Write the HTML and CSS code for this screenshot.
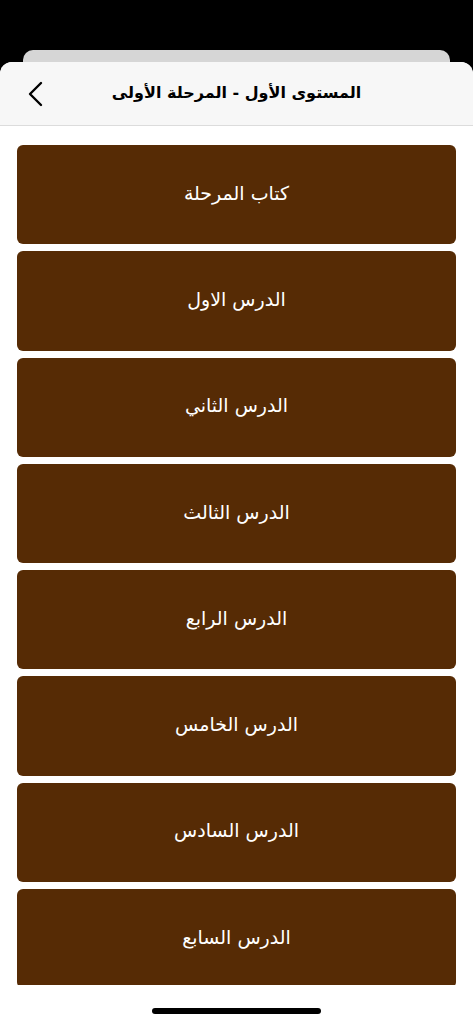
FILE: index.html
```html
<!DOCTYPE html>
<html lang="ar" dir="rtl">

<head>
    <meta charset="UTF-8">
    <meta name="viewport" content="width=device-width, initial-scale=1.0">
    <title>المستوى الأول - المرحلة الأولى</title>
    <link rel="stylesheet" href="styles.css">
</head>

<body>
    <div class="status-bar"></div>
    <div class="sheet-behind"></div>

    <div class="sheet">
        <header class="nav-bar">
            <button class="back-btn" aria-label="رجوع">
                <svg width="18" height="26" viewBox="0 0 18 26">
                    <path d="M14 2 L3 13 L14 24" fill="none" stroke="#000" stroke-width="2.4" stroke-linecap="round" stroke-linejoin="round" />
                </svg>
            </button>
            <h1 class="title">المستوى الأول - المرحلة الأولى</h1>
        </header>

        <div class="list">
            <a class="lesson" href="#">كتاب المرحلة</a>
            <a class="lesson" href="#">الدرس الاول</a>
            <a class="lesson" href="#">الدرس الثاني</a>
            <a class="lesson" href="#">الدرس الثالث</a>
            <a class="lesson" href="#">الدرس الرابع</a>
            <a class="lesson" href="#">الدرس الخامس</a>
            <a class="lesson" href="#">الدرس السادس</a>
            <a class="lesson" href="#">الدرس السابع</a>
        </div>

        <div class="home-bar">
            <span class="indicator"></span>
        </div>
    </div>
</body>

</html>
```

FILE: styles.css
```css
* {
    box-sizing: border-box;
}

body {
    margin: 0;
    height: 100vh;
    background: #000;
    font-family: "DejaVu Sans", "Noto Sans", sans-serif;
    display: flex;
    flex-direction: column;
    overflow: hidden;
}

.status-bar {
    height: 50px;
    flex-shrink: 0;
}

/* the page under the modal, peeking out above it */
.sheet-behind {
    height: 12px;
    flex-shrink: 0;
    margin: 0 23px;
    background: #d6d6d6;
    border-radius: 10px 10px 0 0;
}

.sheet {
    flex: 1;
    display: flex;
    flex-direction: column;
    background: #fff;
    border-radius: 12px 12px 0 0;
    overflow: hidden;
    min-height: 0;
}

.nav-bar {
    height: 64px;
    flex-shrink: 0;
    display: flex;
    align-items: center;
    justify-content: center;
    position: relative;
    background: #f7f7f7;
    border-bottom: 1px solid #dcdcdc;
}

.back-btn {
    position: absolute;
    left: 27px;
    top: 19px;
    padding: 0;
    border: none;
    background: none;
    cursor: pointer;
}

.title {
    margin: 0 0 2px;
    font-size: 16px;
    font-weight: bold;
    color: #000;
}

.list {
    flex: 1;
    min-height: 0;
    overflow: hidden;
    padding: 19px 17px 0;
    display: flex;
    flex-direction: column;
    gap: 7px;
}

.lesson {
    flex-shrink: 0;
    height: 99.3px;
    display: flex;
    align-items: center;
    justify-content: center;
    padding-bottom: 4px;
    background: #562b05;
    border-radius: 6px;
    color: #fff;
    font-size: 19px;
    text-decoration: none;
}

.home-bar {
    height: 39px;
    flex-shrink: 0;
    display: flex;
    justify-content: center;
    padding-top: 23px;
    background: #fff;
}

.indicator {
    width: 169px;
    height: 6px;
    border-radius: 3px;
    background: #000;
}
```
